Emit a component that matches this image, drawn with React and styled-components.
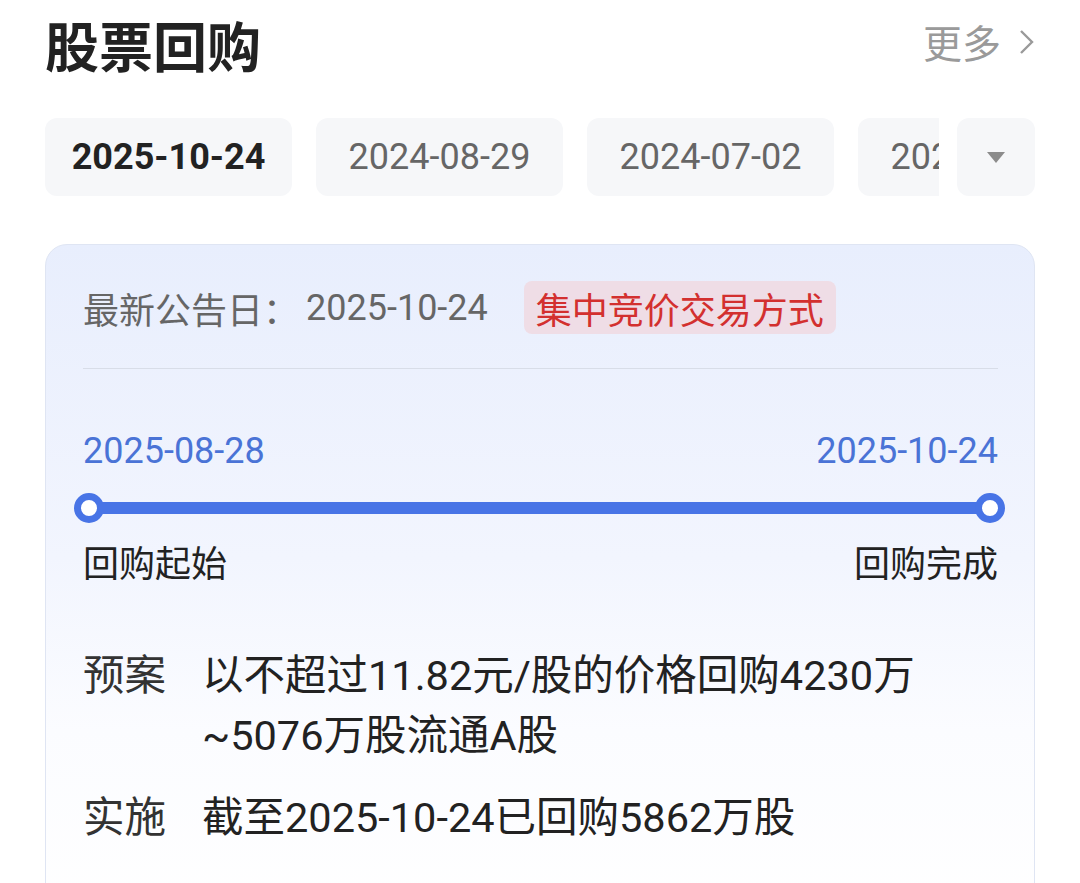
import React from "react";
import styled, { createGlobalStyle } from "styled-components";

const dates = ["2025-10-24", "2024-08-29", "2024-07-02", "2024-06-18"];

const details = [
  { label: "预案", value: "以不超过11.82元/股的价格回购4230万~5076万股流通A股" },
  { label: "实施", value: "截至2025-10-24已回购5862万股" },
];

function App() {
  return (
    <>
      <GlobalStyle />
      <Page>
        <Header>
          <Title>股票回购</Title>
          <More>
            更多
            <svg width="16" height="26" viewBox="0 0 16 26">
              <polyline
                points="2,2 13,13 2,24"
                fill="none"
                stroke="#9a9a9a"
                strokeWidth="2.4"
              />
            </svg>
          </More>
        </Header>

        <TabBar>
          <TabScroller>
            {dates.map((d, i) => (
              <Tab key={d} active={i === 0}>
                {d}
              </Tab>
            ))}
          </TabScroller>
          <DropButton>
            <svg width="18" height="11" viewBox="0 0 18 11">
              <polygon points="0,0 18,0 9,11" fill="#8c8c8c" />
            </svg>
          </DropButton>
        </TabBar>

        <Card>
          <MetaRow>
            <MetaLabel>最新公告日：</MetaLabel>
            <MetaDate>2025-10-24</MetaDate>
            <Tag>集中竞价交易方式</Tag>
          </MetaRow>
          <Divider />

          <DateRow>
            <span>2025-08-28</span>
            <span>2025-10-24</span>
          </DateRow>
          <Track>
            <Dot />
            <Line />
            <Dot />
          </Track>
          <StepRow>
            <span>回购起始</span>
            <span>回购完成</span>
          </StepRow>

          <Details>
            {details.map((item) => (
              <DetailRow key={item.label}>
                <DetailLabel>{item.label}</DetailLabel>
                <DetailValue>{item.value}</DetailValue>
              </DetailRow>
            ))}
          </Details>
        </Card>
      </Page>
    </>
  );
}

const GlobalStyle = createGlobalStyle`
  * {
    box-sizing: border-box;
  }

  body {
    margin: 0;
    background: #fff;
    font-family: Roboto, "Noto Sans CJK SC", sans-serif;
  }
`;

const Page = styled.div`
  width: 1080px;
  padding: 0 45px;
`;

const Header = styled.div`
  display: flex;
  justify-content: space-between;
  align-items: center;
  height: 90px;
`;

const Title = styled.h1`
  margin: 0;
  font-family: "Noto Sans CJK SC", sans-serif;
  font-size: 54px;
  font-weight: 700;
  line-height: 1;
  color: #222;
`;

const More = styled.div`
  display: flex;
  align-items: center;
  gap: 18px;
  margin-bottom: 8px;
  font-family: "Noto Sans CJK SC", sans-serif;
  font-size: 39px;
  color: #9a9a9a;

  svg {
    margin-top: 2px;
  }
`;

const TabBar = styled.div`
  display: flex;
  margin-top: 28px;
  height: 78px;
`;

const TabScroller = styled.div`
  display: flex;
  flex: 1;
  gap: 24px;
  overflow: hidden;
`;

const Tab = styled.div`
  display: flex;
  flex-shrink: 0;
  align-items: center;
  justify-content: center;
  width: 247px;
  border-radius: 12px;
  background: #f6f7f9;
  font-size: 36px;
  font-weight: ${(p) => (p.active ? 700 : 400)};
  color: ${(p) => (p.active ? "#222" : "#666")};
`;

const DropButton = styled.div`
  display: flex;
  align-items: center;
  justify-content: center;
  width: 78px;
  margin-left: 18px;
  border-radius: 12px;
  background: #f6f7f9;
`;

const Card = styled.div`
  margin-top: 48px;
  padding: 36px 36px 90px 37px;
  border: 1px solid #dfe5f3;
  border-radius: 22px;
  background: linear-gradient(180deg, #e8eefd 0%, #f2f5fe 45%, #fbfcff 70%, #ffffff 100%);
`;

const MetaRow = styled.div`
  display: flex;
  align-items: center;
  height: 53px;
  font-size: 36px;
  color: #666;
`;

const MetaLabel = styled.span`
  margin-right: 7px;
`;

const MetaDate = styled.span`
  margin-right: 36px;
`;

const Tag = styled.span`
  display: flex;
  align-items: center;
  height: 53px;
  padding: 0 12px;
  border-radius: 8px;
  background: #efdde6;
  color: #d3302f;
`;

const Divider = styled.div`
  height: 1px;
  margin-top: 34px;
  background: #d8dde8;
`;

const DateRow = styled.div`
  display: flex;
  justify-content: space-between;
  margin-top: 58px;
  font-size: 36px;
  line-height: 48px;
  color: #4a73d6;
`;

const Track = styled.div`
  display: flex;
  align-items: center;
  height: 30px;
  margin: 18px -7px 0 -9px;
`;

const Dot = styled.div`
  flex-shrink: 0;
  width: 30px;
  height: 30px;
  border: 7px solid #4874e6;
  border-radius: 50%;
  background: #fff;
`;

const Line = styled.div`
  flex: 1;
  height: 12px;
  margin: 0 -2px;
  background: #4874e6;
`;

const StepRow = styled.div`
  display: flex;
  justify-content: space-between;
  margin-top: 18px;
  font-size: 36px;
  line-height: 48px;
  color: #222;
`;

const Details = styled.div`
  display: flex;
  flex-direction: column;
  gap: 22px;
  margin-top: 57px;
`;

const DetailRow = styled.div`
  display: flex;
  font-size: 41.5px;
  line-height: 60px;
`;

const DetailLabel = styled.span`
  flex-shrink: 0;
  width: 119px;
  color: #333;
`;

const DetailValue = styled.span`
  flex: 1;
  color: #222;
`;

export default App;
